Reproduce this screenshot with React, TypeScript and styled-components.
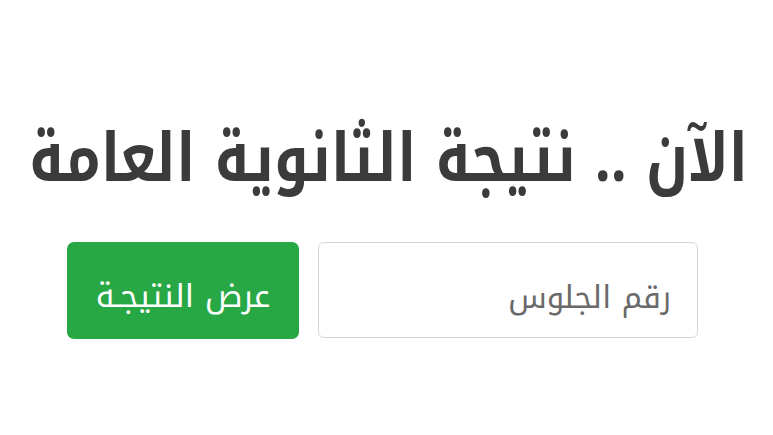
import React from "react";
import styled, { createGlobalStyle } from "styled-components";

const Global = createGlobalStyle`
  html, body { margin: 0; padding: 0; background: #ffffff; }
  body { font-family: "Noto Kufi Arabic", "Noto Sans Arabic", "DejaVu Sans", sans-serif; }
`;

const Page = styled.div`
  direction: rtl;
  width: 773px;
  height: 435px;
  display: flex;
  flex-direction: column;
  align-items: center;
  padding-top: 108px;
  box-sizing: border-box;
`;

const Title = styled.h1`
  margin: 0;
  font-family: "Noto Kufi Arabic", "Noto Sans Arabic", "DejaVu Sans", sans-serif;
  font-weight: 700;
  font-size: 56px;
  line-height: 100px;
  color: #3b3b3b;
  white-space: nowrap;
  transform: translateX(2px) scaleY(1.21);
`;

const Form = styled.form`
  display: flex;
  gap: 19px;
  margin-top: 34px;
  transform: translateX(-4px);
`;

const Input = styled.input`
  width: 380px;
  height: 96px;
  box-sizing: border-box;
  border: 1.5px solid #d4d4d4;
  border-radius: 6px;
  padding: 14px 26px 0 26px;
  font-family: "Noto Kufi Arabic", "Noto Sans Arabic", "DejaVu Sans", sans-serif;
  font-size: 31px;
  color: #555;
  direction: rtl;
  outline: none;
  &::placeholder { color: #6a6a6a; }
`;

const Button = styled.button`
  width: 232px;
  height: 97px;
  box-sizing: border-box;
  border: none;
  border-radius: 7px;
  background: #28a745;
  color: #ffffff;
  font-family: "Noto Kufi Arabic", "Noto Sans Arabic", "DejaVu Sans", sans-serif;
  font-size: 32px;
  padding-top: 12px;
  cursor: pointer;
`;

export default function App() {
  return (
    <>
      <Global />
      <Page>
        <Title>الآن .. نتيجة الثانوية العامة</Title>
        <Form onSubmit={(e) => e.preventDefault()}>
          <Input placeholder="رقم الجلوس" />
          <Button type="submit">عرض النتيجـة</Button>
        </Form>
      </Page>
    </>
  );
}
